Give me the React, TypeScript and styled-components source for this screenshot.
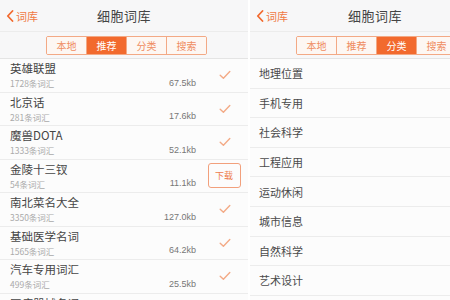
import styled, { createGlobalStyle } from "styled-components";

const GlobalStyle = createGlobalStyle`
	html, body {
		margin: 0;
		padding: 0;
		background: #ffffff;
		font-family: "Noto Sans CJK SC", "Liberation Sans", sans-serif;
	}
`;

const ORANGE = "#f26a2e";

const Screen = styled.div`
	display: flex;
	gap: 2px;
	width: 450px;
	height: 300px;
	overflow: hidden;
	background: #ffffff;
`;

const Phone = styled.div<{ $width: number }>`
	flex: 0 0 ${(p) => p.$width}px;
	width: ${(p) => p.$width}px;
	height: 300px;
	overflow: hidden;
	background: #fdfdfd;
	display: flex;
	flex-direction: column;
`;

const NavBar = styled.div`
	position: relative;
	height: 31px;
	display: flex;
	align-items: center;
	justify-content: center;
	background: #f7f7f8;
	border-bottom: 1px solid #ececec;
	flex-shrink: 0;
`;

const Back = styled.div`
	position: absolute;
	left: 6px;
	top: 9px;
	display: flex;
	align-items: center;
	gap: 2px;
	color: #f07a45;
	font-size: 11px;
	line-height: 14px;
`;

const Title = styled.div`
	font-size: 13px;
	color: #444;
	letter-spacing: 0.5px;
`;

const SegmentRow = styled.div`
	height: 26px;
	display: flex;
	align-items: center;
	padding-left: 46px;
	background: #f7f7f8;
	border-bottom: 1px solid #e4e4e4;
	flex-shrink: 0;
`;

const Segments = styled.div`
	display: flex;
	border: 1px solid #f3a985;
	border-radius: 2px;
	overflow: hidden;
	flex-shrink: 0;
`;

const Segment = styled.div<{ $active: boolean }>`
	width: 39px;
	height: 17px;
	display: flex;
	align-items: center;
	justify-content: center;
	font-size: 10px;
	color: ${(p) => (p.$active ? "#fff" : "#ef8c60")};
	background: ${(p) => (p.$active ? ORANGE : "#fdf7f3")};
	& + & {
		border-left: 1px solid #f3a985;
	}
`;

const List = styled.div`
	display: flex;
	flex-direction: column;
	background: #fcfcfc;
`;

const DictRow = styled.div`
	height: 33.5px;
	display: grid;
	grid-template-columns: 1fr 56px 52px;
	align-items: center;
	padding-left: 10px;
	border-bottom: 1px solid #ececec;
	box-sizing: border-box;
`;

const Names = styled.div`
	display: flex;
	flex-direction: column;
`;

const Name = styled.div`
	font-size: 11.5px;
	color: #454545;
	line-height: 15px;
`;

const Count = styled.div`
	font-size: 8.5px;
	color: #aaa;
	line-height: 12px;
	margin-top: 1px;
`;

const Size = styled.div`
	font-size: 9px;
	color: #777;
	text-align: right;
	align-self: end;
	padding-bottom: 4px;
	font-family: "Liberation Sans", sans-serif;
`;

const Action = styled.div`
	display: flex;
	justify-content: center;
	padding-left: 6px;
`;

const Download = styled.div`
	width: 33px;
	height: 25px;
	border: 1px solid #f2a07c;
	border-radius: 3px;
	display: flex;
	align-items: center;
	justify-content: center;
	font-size: 9px;
	color: #ee7d4c;
	box-sizing: border-box;
	margin-right: 2px;
`;

const CatRow = styled.div`
	height: 29.6px;
	display: flex;
	align-items: center;
	padding-left: 9px;
	font-size: 11px;
	color: #4a4a4a;
	border-bottom: 1px solid #ececec;
	box-sizing: border-box;
`;

const Check = () => (
	<svg width="12" height="10" viewBox="0 0 12 10">
		<path d="M1.2 5.2 L4.4 8.2 L10.8 1.6" fill="none" stroke="#f3aa86" strokeWidth="1.4" strokeLinecap="round" strokeLinejoin="round" />
	</svg>
);

const Chevron = () => (
	<svg width="8" height="12" viewBox="0 0 8 12">
		<path d="M6.5 1 L1.8 6 L6.5 11" fill="none" stroke={ORANGE} strokeWidth="1.8" strokeLinecap="round" strokeLinejoin="round" />
	</svg>
);

const tabs = ["本地", "推荐", "分类", "搜索"];

const dicts = [
	{ name: "英雄联盟", count: "1728条词汇", size: "67.5kb", got: true },
	{ name: "北京话", count: "281条词汇", size: "17.6kb", got: true },
	{ name: "魔兽DOTA", count: "1333条词汇", size: "52.1kb", got: true },
	{ name: "金陵十三钗", count: "54条词汇", size: "11.1kb", got: false },
	{ name: "南北菜名大全", count: "3350条词汇", size: "127.0kb", got: true },
	{ name: "基础医学名词", count: "1565条词汇", size: "64.2kb", got: true },
	{ name: "汽车专用词汇", count: "499条词汇", size: "25.5kb", got: true },
	{ name: "医疗器械名词", count: "820条词汇", size: "31.4kb", got: true },
];

const categories = ["地理位置", "手机专用", "社会科学", "工程应用", "运动休闲", "城市信息", "自然科学", "艺术设计", "生活百科"];

const Header = ({ active }: { active: number }) => (
	<>
		<NavBar>
			<Back>
				<Chevron />
				词库
			</Back>
			<Title>细胞词库</Title>
		</NavBar>
		<SegmentRow>
			<Segments>
				{tabs.map((t, i) => (
					<Segment key={t} $active={i === active}>
						{t}
					</Segment>
				))}
			</Segments>
		</SegmentRow>
	</>
);

export default function App() {
	return (
		<>
			<GlobalStyle />
			<Screen>
				<Phone $width={248}>
					<Header active={1} />
					<List>
						{dicts.map((d) => (
							<DictRow key={d.name}>
								<Names>
									<Name>{d.name}</Name>
									<Count>{d.count}</Count>
								</Names>
								<Size>{d.size}</Size>
								<Action>{d.got ? <Check /> : <Download>下载</Download>}</Action>
							</DictRow>
						))}
					</List>
				</Phone>
				<Phone $width={250}>
					<Header active={2} />
					<List>
						{categories.map((c) => (
							<CatRow key={c}>{c}</CatRow>
						))}
					</List>
				</Phone>
			</Screen>
		</>
	);
}
